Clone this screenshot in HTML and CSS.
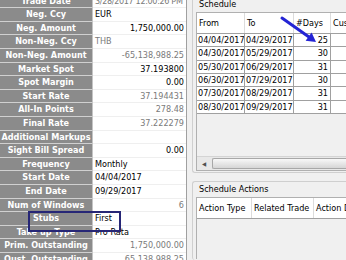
FILE: index.html
```html
<!DOCTYPE html>
<html lang="en">
  <head>
    <meta charset="UTF-8" />
    <title>Trade Schedule</title>
    <link rel="stylesheet" href="styles.css">
  </head>
  <body>
    <div class="screen">
      <div class="props">
        <div class="row"><div class="label">Trade Date</div><div class="value muted tight">3/28/2017 12:00:26 PM</div></div>
        <div class="row"><div class="label">Neg. Ccy</div><div class="value">EUR</div></div>
        <div class="row"><div class="label">Neg. Amount</div><div class="value num">1,750,000.00</div></div>
        <div class="row"><div class="label">Non-Neg. Ccy</div><div class="value muted">THB</div></div>
        <div class="row"><div class="label">Non-Neg. Amount</div><div class="value num muted">-65,138,988.25</div></div>
        <div class="row"><div class="label">Market Spot</div><div class="value num">37.193800</div></div>
        <div class="row"><div class="label">Spot Margin</div><div class="value num">0.00</div></div>
        <div class="row"><div class="label">Start Rate</div><div class="value num muted">37.194431</div></div>
        <div class="row"><div class="label">All-In Points</div><div class="value num muted">278.48</div></div>
        <div class="row"><div class="label">Final Rate</div><div class="value num muted">37.222279</div></div>
        <div class="row"><div class="label">Additional Markups</div><div class="value"></div></div>
        <div class="row"><div class="label">Sight Bill Spread</div><div class="value num">0.00</div></div>
        <div class="row"><div class="label">Frequency</div><div class="value">Monthly</div></div>
        <div class="row"><div class="label">Start Date</div><div class="value">04/04/2017</div></div>
        <div class="row"><div class="label">End Date</div><div class="value">09/29/2017</div></div>
        <div class="row"><div class="label">Num of Windows</div><div class="value num muted">6</div></div>
        <div class="row"><div class="label">Stubs</div><div class="value">First</div></div>
        <div class="row"><div class="label">Take up Type</div><div class="value">Pro Rata</div></div>
        <div class="row"><div class="label">Prim. Outstanding</div><div class="value num muted">1,750,000.00</div></div>
        <div class="row"><div class="label">Oust. Outstanding</div><div class="value num muted">65,138,988.25</div></div>
      </div>

      <div class="side">
        <div class="panel schedule">
          <div class="panel-title">Schedule</div>
          <div class="grid">
            <div class="grid-head">
              <div class="cell c-from">From</div>
              <div class="cell c-to">To</div>
              <div class="cell c-days">#Days</div>
              <div class="cell c-rest">Cus</div>
            </div>
            <div class="grid-row"><div class="cell c-from">04/04/2017</div><div class="cell c-to">04/29/2017</div><div class="cell c-days">25</div><div class="cell c-rest"></div></div>
            <div class="grid-row"><div class="cell c-from">04/30/2017</div><div class="cell c-to">05/29/2017</div><div class="cell c-days">30</div><div class="cell c-rest"></div></div>
            <div class="grid-row"><div class="cell c-from">05/30/2017</div><div class="cell c-to">06/29/2017</div><div class="cell c-days">31</div><div class="cell c-rest"></div></div>
            <div class="grid-row"><div class="cell c-from">06/30/2017</div><div class="cell c-to">07/29/2017</div><div class="cell c-days">30</div><div class="cell c-rest"></div></div>
            <div class="grid-row"><div class="cell c-from">07/30/2017</div><div class="cell c-to">08/29/2017</div><div class="cell c-days">31</div><div class="cell c-rest"></div></div>
            <div class="grid-row"><div class="cell c-from">08/30/2017</div><div class="cell c-to">09/29/2017</div><div class="cell c-days">31</div><div class="cell c-rest"></div></div>
            <div class="grid-fill"></div>
            <div class="hscroll">
              <div class="scroll-btn">&#9664;</div>
              <div class="thumb"></div>
            </div>
          </div>
        </div>

        <div class="panel actions">
          <div class="panel-title">Schedule Actions</div>
          <div class="grid">
            <div class="grid-head">
              <div class="cell c-type">Action Type</div>
              <div class="cell c-related">Related Trade</div>
              <div class="cell c-rest">Action Date</div>
            </div>
            <div class="grid-fill"></div>
          </div>
        </div>
      </div>

      <!-- annotation overlays -->
      <div class="stubs-mark"></div>
      <svg class="pointer" width="346" height="260" viewBox="0 0 346 260">
        <line x1="282" y1="18" x2="309" y2="37" stroke="#2424d4" stroke-width="3" stroke-linecap="round" />
        <polygon points="316,42 305.6,40.8 311.6,32.4" fill="#2424d4" />
      </svg>
    </div>
  </body>
</html>
```

FILE: styles.css
```css
* {
  box-sizing: border-box;
  margin: 0;
  padding: 0;
}

body {
  font-family: "DejaVu Sans", sans-serif;
  font-stretch: condensed;
  font-size: 9px;
  color: #000000;
  background-color: #f0f0f0;
  overflow: hidden;
}

.screen {
  position: relative;
  display: flex;
  width: 346px;
  height: 260px;
  overflow: hidden;
}

/* property sheet on the left */
.props {
  width: 187px;
  flex-shrink: 0;
  margin-top: -5.3px;
  background-color: #ffffff;
  border-right: 1px solid #a0a0a0;
}

.row {
  display: grid;
  grid-template-columns: 93px 1fr;
  height: 13.6px;
}

.label {
  background-color: #8b8b8b;
  color: #ffffff;
  font-weight: bold;
  font-size: 9px;
  line-height: 12.6px;
  text-align: center;
  white-space: nowrap;
  overflow: hidden;
  border-bottom: 1px solid #d0d0d0;
  border-right: 1px solid #c4c4c4;
}

.value {
  padding: 0 2px;
  line-height: 12.6px;
  white-space: nowrap;
  overflow: hidden;
  border-bottom: 1px solid #efefef;
}

.value.num {
  text-align: right;
}

.value.muted {
  color: #7a7a7a;
}

.value.tight {
  letter-spacing: -0.35px;
}

/* right side panels */
.side {
  flex: 1;
  display: flex;
  flex-direction: column;
  gap: 8px;
  padding-left: 5px;
  overflow: hidden;
}

.panel {
  display: flex;
  flex-direction: column;
  padding: 0 0 1px 3px;
  border: 1px solid #cfcfcf;
  border-right: 0;
  border-radius: 3px 0 0 3px;
}

.panel.schedule {
  margin-top: -4px;
}

.panel.actions {
  flex: 1;
  border-bottom: 0;
}

.panel-title {
  height: 15px;
  line-height: 14px;
  padding-left: 3px;
  white-space: nowrap;
}

.grid {
  display: flex;
  flex-direction: column;
  background-color: #f0f0f0;
  border: 1px solid #b0b0b0;
  border-right: 0;
}

.schedule .grid {
  height: 159px;
}

.actions .grid {
  flex: 1;
  border-bottom: 0;
}

.grid-head {
  display: flex;
  height: 21px;
  background-color: #ffffff;
  border-bottom: 1px solid #a0a0a0;
}

.grid-head .cell {
  line-height: 20px;
  padding-left: 2px;
  border-right: 1px solid #dcdcdc;
}

.grid-row {
  display: flex;
  height: 13.33px;
  background-color: #ffffff;
  border-bottom: 1px solid #a0a0a0;
}

.grid-row .cell {
  line-height: 12.33px;
  padding: 0 1px;
  border-right: 1px solid #a0a0a0;
}

.cell {
  flex-shrink: 0;
  white-space: nowrap;
  overflow: hidden;
}

.c-from {
  width: 48px;
}

.c-to {
  width: 49px;
}

.c-days {
  width: 37px;
}

.grid-row .c-days {
  text-align: right;
  padding-right: 2px;
}

.c-type {
  width: 55px;
}

.c-related {
  width: 62px;
}

.c-rest {
  flex: 1;
  border-right: 0 !important;
}

.grid-fill {
  flex: 1;
}

.hscroll {
  display: flex;
  height: 14px;
  background-color: #e8e8e8;
  border-top: 1px solid #d4d4d4;
}

.scroll-btn {
  width: 14px;
  font-size: 6px;
  line-height: 13px;
  text-align: center;
  color: #505050;
}

.thumb {
  flex: 1;
  margin: 1px 0 1px 1px;
  border: 1px solid #a8a8a8;
  border-right: 0;
  border-radius: 2px 0 0 2px;
  background: linear-gradient(#f8f8f8, #d6d6d6);
}

/* annotations */
.stubs-mark {
  position: absolute;
  left: 28px;
  top: 211px;
  width: 93px;
  height: 21px;
  border: 2px solid #262676;
}

.pointer {
  position: absolute;
  left: 0;
  top: 0;
}
```
